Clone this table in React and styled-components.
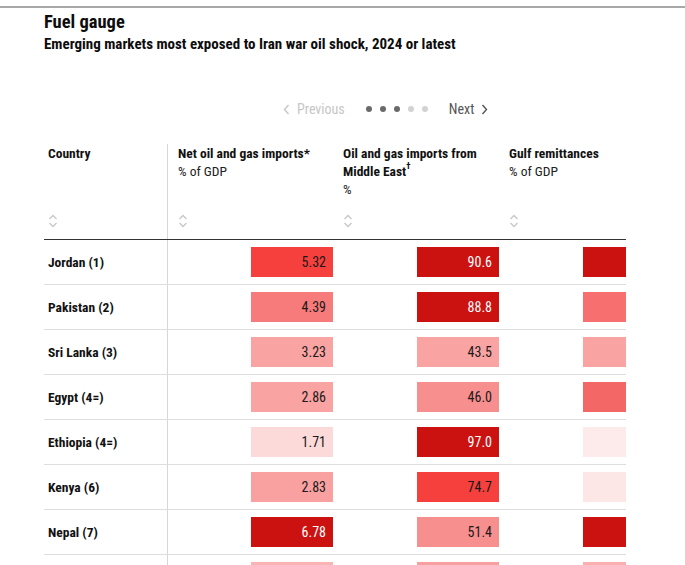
import React from 'react';
import styled, { createGlobalStyle } from 'styled-components';

const GlobalStyle = createGlobalStyle`
  html, body {
    margin: 0;
    padding: 0;
    background: #fff;
  }
  body {
    font-family: "Liberation Sans Narrow", "Roboto Condensed", "Arial Narrow", "Liberation Sans", sans-serif;
    color: #111;
    overflow: hidden;
  }
`;

const Page = styled.div`
  width: 685px;
  height: 565px;
  overflow: hidden;
`;

const TopRule = styled.div`
  margin-top: 6px;
  height: 2px;
  background: #a8a8a8;
`;

const Body = styled.div`
  padding-left: 44px;
`;

const Title = styled.h1`
  margin: 3px 0 0;
  font-size: 18.5px;
  line-height: 22px;
  font-weight: 700;
  color: #0d0d0d;
`;

const Subtitle = styled.h2`
  margin: 1px 0 0;
  font-size: 15px;
  line-height: 20px;
  font-weight: 700;
  color: #0d0d0d;
`;

const Pager = styled.div`
  margin-top: 45px;
  padding-left: 239px;
  display: flex;
  align-items: center;
  height: 20px;
  font-size: 14px;
`;

const PagerLink = styled.span`
  display: flex;
  align-items: center;
  gap: 7px;
  color: ${(p) => (p.$disabled ? '#c6c6c6' : '#555')};
`;

const Dots = styled.div`
  display: flex;
  gap: 8px;
  margin: 0 21px;
`;

const Dot = styled.span`
  width: 6px;
  height: 6px;
  border-radius: 50%;
  background: ${(p) => (p.$active ? '#6a6a6a' : '#d2d2d2')};
`;

const Table = styled.div`
  margin-top: 25px;
  width: 582px;
  overflow: hidden;
`;

const Row = styled.div`
  display: grid;
  grid-template-columns: 123px 166px 166px 166px;
  width: 621px;
  border-bottom: 1px solid ${(p) => (p.$head ? '#333' : '#dedede')};
`;

const HeadCell = styled.div`
  height: 95px;
  display: flex;
  flex-direction: column;
  justify-content: space-between;
  padding: 0 0 11px ${(p) => (p.$first ? '4px' : '10px')};
  border-left: ${(p) => (p.$divided ? '1px solid #d6d6d6' : 'none')};
  box-sizing: border-box;
`;

const HeadTitle = styled.div`
  font-size: 13.5px;
  line-height: 18px;
  font-weight: 700;
  color: #111;
`;

const Mark = styled.span`
  font-size: 9px;
  line-height: 1;
  vertical-align: top;
`;

const HeadUnit = styled.div`
  font-size: 13.5px;
  line-height: 18px;
  font-weight: 400;
  color: #222;
`;

const CountryCell = styled.div`
  height: 44px;
  display: flex;
  align-items: center;
  padding-left: 4px;
  font-size: 13.5px;
  font-weight: 700;
  color: #111;
`;

const ValueCell = styled.div`
  height: 44px;
  display: flex;
  align-items: center;
  justify-content: flex-end;
  border-left: ${(p) => (p.$divided ? '1px solid #d6d6d6' : 'none')};
  box-sizing: border-box;
`;

const Swatch = styled.div`
  width: 82px;
  height: 30px;
  box-sizing: border-box;
  padding-right: 7px;
  display: flex;
  align-items: center;
  justify-content: flex-end;
  font-size: 14px;
  color: ${(p) => (p.$light ? '#fff' : '#1a1a1a')};
  background: ${(p) => p.$bg};
`;

const SortIcon = () => (
  <svg width="10" height="14" viewBox="0 0 10 14" fill="none" stroke="#c9c9c9" strokeWidth="1.4">
    <polyline points="1.5,5 5,1.5 8.5,5" />
    <polyline points="1.5,9 5,12.5 8.5,9" />
  </svg>
);

const Chevron = ({ dir }) => (
  <svg width="7" height="11" viewBox="0 0 7 11" fill="none" stroke="currentColor" strokeWidth="1.4">
    {dir === 'left' ? <polyline points="5.5,1 1.5,5.5 5.5,10" /> : <polyline points="1.5,1 5.5,5.5 1.5,10" />}
  </svg>
);

const DARK = '#cc1111';

const rows = [
  { name: 'Jordan (1)', a: ['5.32', '#f5403d'], b: ['90.6', DARK], c: DARK },
  { name: 'Pakistan (2)', a: ['4.39', '#f77b7b'], b: ['88.8', DARK], c: '#f86f6f' },
  { name: 'Sri Lanka (3)', a: ['3.23', '#f9a3a3'], b: ['43.5', '#f9a3a3'], c: '#f9a3a3' },
  { name: 'Egypt (4=)', a: ['2.86', '#f9a3a3'], b: ['46.0', '#f88f8f'], c: '#f46767' },
  { name: 'Ethiopia (4=)', a: ['1.71', '#fddada'], b: ['97.0', DARK], c: '#fdebeb' },
  { name: 'Kenya (6)', a: ['2.83', '#f9a1a1'], b: ['74.7', '#f5403d'], c: '#fde6e6' },
  { name: 'Nepal (7)', a: ['6.78', DARK], b: ['51.4', '#f88f8f'], c: DARK },
  { name: 'Bangladesh (8)', a: ['2.41', '#fbb4b4'], b: ['55.0', '#f8a0a0'], c: '#fbb0b0' },
];

const headers = [
  { title: 'Net oil and gas imports*', unit: '% of GDP' },
  { title: <>Oil and gas imports from Middle East<Mark>†</Mark></>, unit: '%' },
  { title: 'Gulf remittances', unit: '% of GDP' },
];

export default function App() {
  return (
    <Page>
      <GlobalStyle />
      <TopRule />
      <Body>
        <Title>Fuel gauge</Title>
        <Subtitle>Emerging markets most exposed to Iran war oil shock, 2024 or latest</Subtitle>
        <Pager>
          <PagerLink $disabled>
            <Chevron dir="left" />
            Previous
          </PagerLink>
          <Dots>
            {[1, 1, 1, 0, 0].map((on, i) => (
              <Dot key={i} $active={!!on} />
            ))}
          </Dots>
          <PagerLink>
            Next
            <Chevron dir="right" />
          </PagerLink>
        </Pager>
        <Table>
          <Row $head>
            <HeadCell $first>
              <HeadTitle>Country</HeadTitle>
              <SortIcon />
            </HeadCell>
            {headers.map((h, i) => (
              <HeadCell key={i} $divided={i === 0}>
                <div>
                  <HeadTitle>{h.title}</HeadTitle>
                  <HeadUnit>{h.unit}</HeadUnit>
                </div>
                <SortIcon />
              </HeadCell>
            ))}
          </Row>
          {rows.map((r) => (
            <Row key={r.name}>
              <CountryCell>{r.name}</CountryCell>
              <ValueCell $divided>
                <Swatch $bg={r.a[1]} $light={r.a[1] === DARK}>{r.a[0]}</Swatch>
              </ValueCell>
              <ValueCell>
                <Swatch $bg={r.b[1]} $light={r.b[1] === DARK}>{r.b[0]}</Swatch>
              </ValueCell>
              <ValueCell>
                <Swatch $bg={r.c} />
              </ValueCell>
            </Row>
          ))}
        </Table>
      </Body>
    </Page>
  );
}
